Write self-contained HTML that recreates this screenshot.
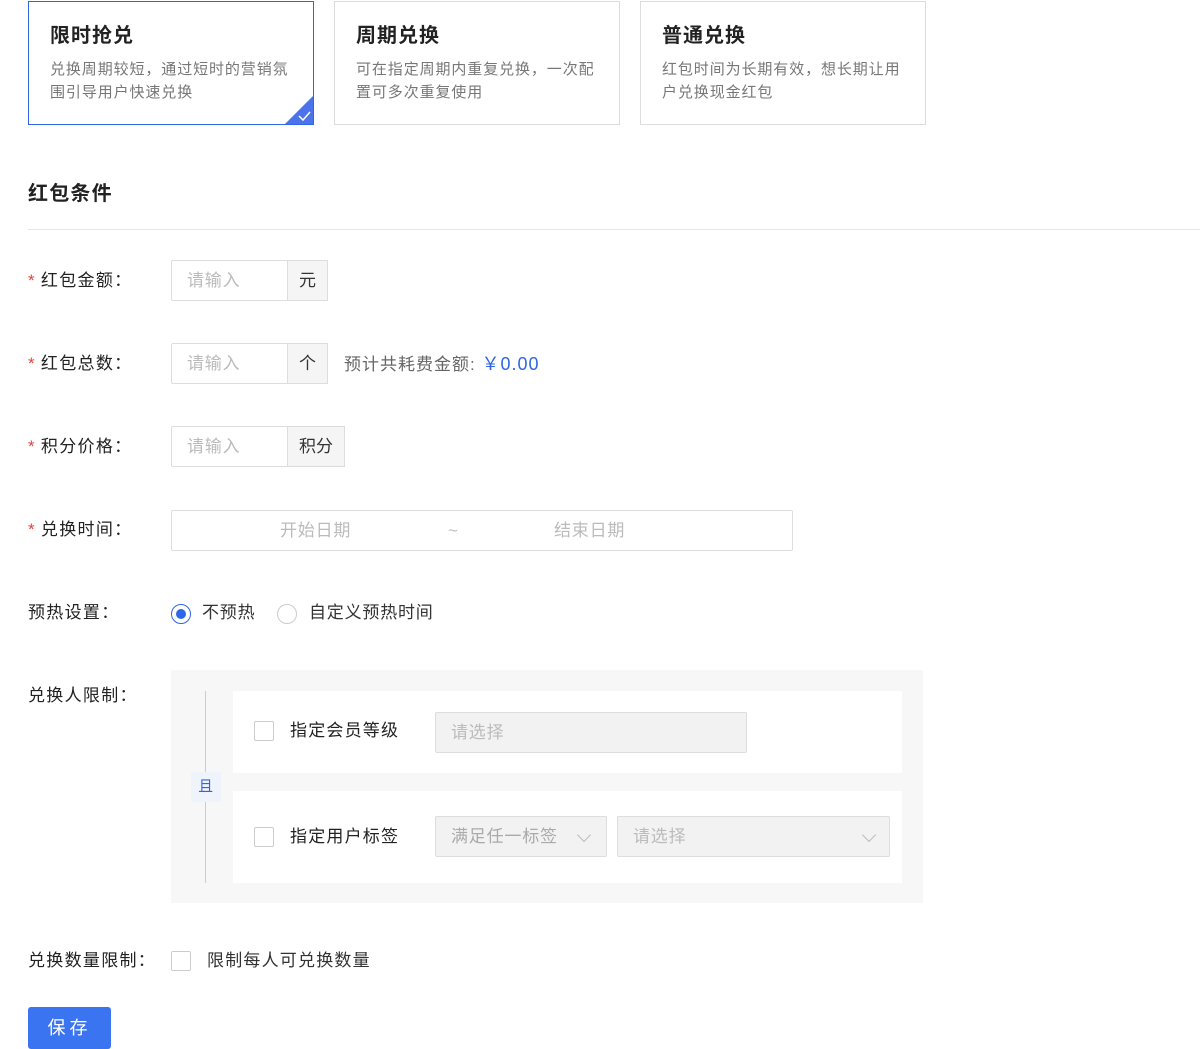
<!DOCTYPE html>
<html><head><meta charset="utf-8"><style>
*{box-sizing:border-box;margin:0;padding:0}
body{width:1200px;height:1046px;overflow:hidden;background:#fff;font-family:"Liberation Sans","Noto Sans CJK SC",sans-serif;color:#333;position:relative;letter-spacing:0.8px}
.a{position:absolute}
.card{position:absolute;top:1px;width:286px;height:124px;border:1px solid #dcdcdc;background:#fff}
.card h3{position:absolute;left:21px;top:20px;font-size:20px;font-weight:bold;color:#222;line-height:28px;letter-spacing:1px}
.card p{position:absolute;left:21px;top:56px;width:240px;font-size:15px;color:#777;line-height:23px;letter-spacing:0.9px}
.lbl{position:absolute;left:28px;font-size:17px;color:#222;line-height:24px;letter-spacing:1.3px}
.lbl b{color:#e8413a;font-weight:normal;margin-right:5px}
.inp{position:absolute;left:171px;width:117px;height:41px;border:1px solid #ddd;border-radius:2px 0 0 2px;font-size:17px;color:#bbb;line-height:39px;padding-left:15px}
.add{position:absolute;left:287px;height:41px;border:1px solid #ddd;background:#f5f5f5;font-size:17px;color:#333;line-height:39px;text-align:center;letter-spacing:0}
.sel{position:absolute;background:#f2f2f2;border:1px solid #ddd;border-radius:2px;font-size:17px;color:#bbb;line-height:39px;padding-left:15px;height:41px}
.chk{position:absolute;width:20px;height:20px;border:1px solid #ccc;border-radius:2px;background:#fff}
.arr{position:absolute;top:13px;width:10px;height:10px;border-right:1px solid #bbb;border-bottom:1px solid #bbb;transform:rotate(45deg)}
</style></head><body>
<div class="card" style="left:28px;border-color:#2e66e6">
<h3>限时抢兑</h3><p>兑换周期较短，通过短时的营销氛围引导用户快速兑换</p>
<svg class="a" style="right:0;bottom:0" width="28" height="28"><polygon points="28,0 28,28 0,28" fill="#4a73ec"/><path d="M14 20 L18 24 L25 16" stroke="#fff" stroke-width="1.5" fill="none"/></svg>
</div>
<div class="card" style="left:334px"><h3>周期兑换</h3><p>可在指定周期内重复兑换，一次配置可多次重复使用</p></div>
<div class="card" style="left:640px"><h3>普通兑换</h3><p>红包时间为长期有效，想长期让用户兑换现金红包</p></div>

<div class="a" style="left:28px;top:180px;font-size:20px;font-weight:bold;color:#222;line-height:28px;letter-spacing:1.2px">红包条件</div>
<div class="a" style="left:28px;top:229px;width:1172px;height:1px;background:#e5e5e5"></div>

<div class="lbl" style="top:269px"><b>*</b>红包金额：</div>
<div class="inp" style="top:260px">请输入</div><div class="add" style="top:260px;width:41px">元</div>

<div class="lbl" style="top:352px"><b>*</b>红包总数：</div>
<div class="inp" style="top:343px">请输入</div><div class="add" style="top:343px;width:41px">个</div>
<div class="a" style="left:344px;top:352px;font-size:17px;line-height:24px;color:#666;letter-spacing:1px">预计共耗费金额: <span style="color:#2e66e6;font-size:18px">￥0.00</span></div>

<div class="lbl" style="top:435px"><b>*</b>积分价格：</div>
<div class="inp" style="top:426px">请输入</div><div class="add" style="top:426px;width:58px">积分</div>

<div class="lbl" style="top:518px"><b>*</b>兑换时间：</div>
<div class="a" style="left:171px;top:510px;width:622px;height:41px;border:1px solid #ddd;border-radius:2px;font-size:17px;color:#bbb;line-height:39px">
<span class="a" style="left:108px">开始日期</span><span class="a" style="left:276px">~</span><span class="a" style="left:382px">结束日期</span></div>

<div class="lbl" style="top:601px">预热设置：</div>
<div class="a" style="left:171px;top:604px;width:20px;height:20px;border:1px solid #2e66e6;border-radius:50%"><div class="a" style="left:4px;top:4px;width:10px;height:10px;border-radius:50%;background:#2e66e6"></div></div>
<div class="a" style="left:202px;top:601px;font-size:17px;line-height:24px">不预热</div>
<div class="a" style="left:277px;top:604px;width:20px;height:20px;border:1px solid #ccc;border-radius:50%"></div>
<div class="a" style="left:309px;top:601px;font-size:17px;line-height:24px">自定义预热时间</div>

<div class="lbl" style="top:684px">兑换人限制：</div>
<div class="a" style="left:171px;top:670px;width:752px;height:233px;background:#f7f7f7"></div>
<div class="a" style="left:205px;top:691px;width:1px;height:192px;background:#ccc"></div>
<div class="a" style="left:191px;top:772px;width:30px;height:30px;background:#eef3fc;color:#2e66e6;font-size:15px;text-align:center;line-height:30px">且</div>
<div class="a" style="left:233px;top:691px;width:669px;height:82px;background:#fff"></div>
<div class="a" style="left:233px;top:791px;width:669px;height:92px;background:#fff"></div>
<div class="chk" style="left:254px;top:721px"></div>
<div class="a" style="left:290px;top:719px;font-size:17px;line-height:24px;color:#222;letter-spacing:1.2px">指定会员等级</div>
<div class="sel" style="left:435px;top:712px;width:312px">请选择</div>
<div class="chk" style="left:254px;top:827px"></div>
<div class="a" style="left:290px;top:825px;font-size:17px;line-height:24px;color:#222;letter-spacing:1.2px">指定用户标签</div>
<div class="sel" style="left:435px;top:816px;width:172px;color:#aaa">满足任一标签<div class="arr" style="left:143px"></div></div>
<div class="sel" style="left:617px;top:816px;width:273px">请选择<div class="arr" style="left:246px"></div></div>

<div class="lbl" style="top:949px">兑换数量限制：</div>
<div class="chk" style="left:171px;top:951px"></div>
<div class="a" style="left:207px;top:949px;font-size:17px;line-height:24px;letter-spacing:1.2px">限制每人可兑换数量</div>
<div class="a" style="left:28px;top:1007px;width:83px;height:42px;background:#3a74f0;border-radius:3px;color:#fff;font-size:18px;line-height:42px;text-align:center;letter-spacing:4px">保存</div>
</body></html>
